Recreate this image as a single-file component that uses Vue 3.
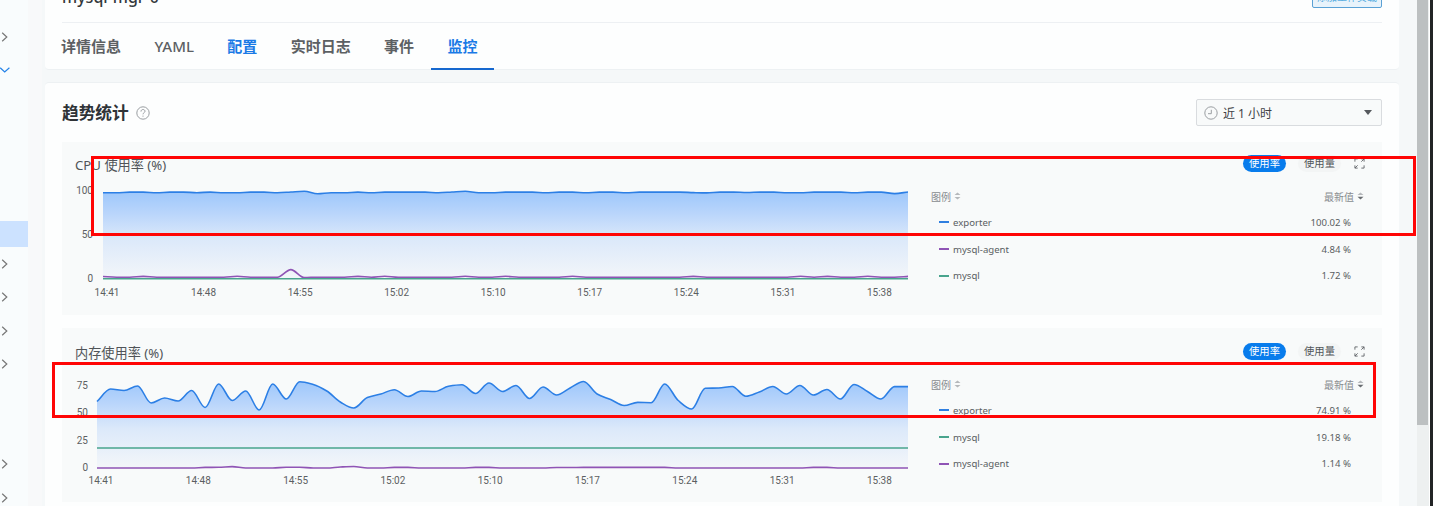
<script setup>
const tabs = [
  { name: '详情信息' }, { name: 'YAML', latin: true }, { name: '配置', blue: true },
  { name: '实时日志' }, { name: '事件' }, { name: '监控', blue: true, active: true },
]

// Monotone cubic curve through evenly spaced points
function curve(x0, x1, ys) {
  const n = ys.length
  const h = (x1 - x0) / (n - 1)
  const d = ys.slice(1).map((y, i) => (y - ys[i]) / h)
  const m = ys.map((_, i) => {
    if (i === 0) return d[0]
    if (i === n - 1) return d[n - 2]
    const a = d[i - 1], b = d[i]
    return a * b <= 0 ? 0 : (2 * a * b) / (a + b)
  })
  let p = `M${x0},${ys[0]}`
  for (let i = 1; i < n; i++) {
    const xa = x0 + h * (i - 1), xb = x0 + h * i
    p += `C${(xa + h / 3).toFixed(2)},${(ys[i - 1] + m[i - 1] * h / 3).toFixed(2)} ${(xb - h / 3).toFixed(2)},${(ys[i] - m[i] * h / 3).toFixed(2)} ${xb.toFixed(2)},${ys[i]}`
  }
  return p
}
function flat(base, bumps) {
  return Array.from({ length: 61 }, (_, i) => (i in bumps ? bumps[i] : base))
}

const cpuTop = flat(50.1, {
  0: 50.8, 1: 50.8, 4: 50.8, 7: 50.7, 9: 50.8, 10: 50.8, 13: 50.8, 14: 50, 15: 49.2, 16: 51.8, 17: 50.8, 18: 50.8,
  20: 50.8, 25: 50.8, 26: 50, 27: 49.2, 28: 50.8, 29: 50.8, 33: 50.8, 36: 50.8, 39: 50.8, 44: 50.6, 45: 50.9,
  48: 50.5, 51: 50.8, 52: 50.8, 56: 50.8, 59: 51.6, 60: 50,
})
const cpuAgent = flat(135.2, {
  0: 134.5, 3: 134.4, 10: 134.3, 14: 127.6, 15: 135.6, 19: 134.4, 21: 134.2, 27: 134.3, 30: 134.3, 35: 134.3,
  44: 134.4, 52: 134.3, 54: 134.4, 57: 134.3, 60: 134.4,
})
const memTop = [
  401.5, 389, 390.5, 386, 403, 398, 401, 390.5, 407.5, 384, 400.5, 391, 410, 384, 399, 381.7, 384.5, 391, 402, 408,
  397.5, 394, 389.7, 396.5, 391, 391.5, 386.3, 384.8, 393.5, 383, 391.5, 385.5, 398.5, 387, 395, 388, 381.5, 394,
  399.5, 405.5, 402.4, 402.7, 384, 400.5, 409, 388.3, 388, 386.5, 396.3, 392, 386.5, 394, 385.5, 395, 389.5, 399,
  384.5, 391.5, 399, 386.6, 386.6,
].map((y) => y - 328)
const memAgent = flat(140, {
  8: 139.4, 9: 139.3, 10: 138.6, 14: 139.3, 15: 139.3, 18: 139, 19: 138.5, 22: 139.4, 23: 139.4, 28: 139.4, 29: 139.4,
  34: 139.5, 35: 139.5, 36: 139.4, 37: 139.4, 38: 139.4, 39: 139.4, 40: 139.4, 41: 139.4, 42: 139.4, 53: 139.4, 54: 139.4,
})

const times = ['14:41', '14:48', '14:55', '15:02', '15:10', '15:17', '15:24', '15:31', '15:38']
const BLUE = '#2f7fe0', PURPLE = '#8f54b5', GREEN = '#49a48d'

const charts = [
  {
    id: 'cpu', title: 'CPU 使用率 (%)', titleY: 28, x0: 41, base: 137, labelX: 31, tx: 45, step: 96.55,
    ticks: [['100', 48], ['50', 92.5], ['0', 136.5]],
    top: curve(41, 846, cpuTop),
    lines: [{ c: PURPLE, d: curve(41, 846, cpuAgent) }, { c: GREEN, d: 'M41,136.8H846' }],
    rows: [['exporter', '100.02 %', BLUE], ['mysql-agent', '4.84 %', PURPLE], ['mysql', '1.72 %', GREEN]],
  },
  {
    id: 'mem', title: '内存使用率 (%)', titleY: 30, x0: 35, base: 140, labelX: 26, tx: 39, step: 97.3,
    ticks: [['75', 57], ['50', 84.5], ['25', 112], ['0', 139.5]],
    top: curve(35, 846, memTop),
    lines: [{ c: GREEN, d: 'M35,120H846' }, { c: PURPLE, d: curve(35, 846, memAgent) }],
    rows: [['exporter', '74.91 %', BLUE], ['mysql', '19.18 %', GREEN], ['mysql-agent', '1.14 %', PURPLE]],
  },
]
const arrows = ['right', 'down', 'right', 'right', 'right', 'right', 'right', 'right']
</script>

<template>
  <div class="page">
    <aside class="side">
      <div class="nav">
        <svg v-for="(a, i) in arrows" :key="i" :class="['arrow', 'a' + i]" viewBox="0 0 10 10">
          <path v-if="a === 'right'" d="M2.2 .8L6.8 5L2.2 9.2" stroke="#777" />
          <path v-else d="M.2 2.8L4.7 7L9.4 2.8" stroke="#2583e8" />
        </svg>
      </div>
      <div class="selected"></div>
    </aside>

    <main class="main">
      <section class="panel head">
        <div class="head-top">
          <span class="name">mysql-mgr-0</span>
          <button class="refresh">添加工作负载</button>
        </div>
        <nav class="tabs">
          <span v-for="t in tabs" :key="t.name" :class="['tab', { blue: t.blue, active: t.active, latin: t.latin }]">{{ t.name }}</span>
        </nav>
      </section>

      <section class="panel stats">
        <header class="stats-head">
          <h2>趋势统计</h2>
          <svg class="help" viewBox="0 0 14 14">
            <circle cx="7" cy="7" r="6.2" />
            <path d="M5 5.6C5 4.2 5.9 3.5 7 3.5S9 4.2 9 5.3C9 6.6 7 6.7 7 8.3M7 9.6V10.7" />
          </svg>
          <div class="range">
            <svg class="clock" viewBox="0 0 14 14">
              <circle cx="7" cy="7" r="6.2" />
              <path d="M7.3 3.8V7.7H4" />
            </svg>
            <span>近 1 小时</span>
            <i class="caret"></i>
          </div>
        </header>

        <article v-for="c in charts" :key="c.id" :class="['card', c.id]">
          <svg class="plot" viewBox="0 0 860 174">
            <defs>
              <linearGradient :id="'fill-' + c.id" x1="0" y1="0" x2="0" y2="1">
                <stop offset="0" stop-color="#9dc7fb" />
                <stop offset=".25" stop-color="#b9d5fb" />
                <stop offset=".55" stop-color="#dce9fa" />
                <stop offset="1" stop-color="#f3f6f9" />
              </linearGradient>
            </defs>
            <text class="title" x="13" :y="c.titleY">{{ c.title }}</text>
            <path :d="`${c.top}V${c.base}H${c.x0}Z`" :fill="`url(#fill-${c.id})`" />
            <path v-for="l in c.lines" :key="l.c" :d="l.d" :stroke="l.c" class="line" />
            <path :d="c.top" stroke="#2c7fe5" class="line" />
            <text v-for="t in c.ticks" :key="t[0]" class="axis" text-anchor="end" :x="c.labelX" :y="t[1] + 3.6">{{ t[0] }}</text>
            <text v-for="(t, i) in times" :key="t" class="axis" text-anchor="middle" :x="c.tx + i * c.step" :y="c.id === 'cpu' ? 154 : 156">{{ t }}</text>
          </svg>
          <div class="legend">
            <div class="tools">
              <span class="pill on">使用率</span>
              <span class="pill">使用量</span>
              <svg class="expand" viewBox="0 0 12 12">
                <path d="M1 4V1H4M8 1H11V4M11 1L8 4M1 8V11H4M1 11L4 8M8 11H11V8" />
              </svg>
            </div>
            <div class="thead">
              <span>图例</span>
              <svg class="sort pale" viewBox="0 0 7 8"><path d="M.5 3L3.5 .5L6.5 3ZM.5 5L3.5 7.5L6.5 5Z" /></svg>
              <span class="latest">最新值</span>
              <svg class="sort" viewBox="0 0 7 8"><path class="up" d="M.5 3L3.5 .5L6.5 3Z" /><path d="M.5 4.8L3.5 7.5L6.5 4.8Z" /></svg>
            </div>
            <div v-for="r in c.rows" :key="r[0]" class="row">
              <i class="mark" :style="{ background: r[2] }"></i>
              <span>{{ r[0] }}</span>
              <span class="value">{{ r[1] }}</span>
            </div>
          </div>
        </article>
      </section>
    </main>

    <div class="scroll"><div class="thumb"></div></div>
    <div class="edge"></div>
    <div class="mark-box box-cpu"></div>
    <div class="mark-box box-mem"></div>
  </div>
</template>

<style>
body { background: #f5f8f9; overflow: hidden; }
</style>

<style scoped>
* { box-sizing: border-box; }
.page {
  position: relative; display: flex; width: 1433px; height: 506px; overflow: hidden;
  background: #f5f8f9; color: #5a5e62;
  font-family: "Noto Sans", "Noto Sans CJK SC", sans-serif;
}
.side { position: relative; flex: none; width: 42px; background: linear-gradient(90deg, #f9fcfd 28px, #f8f9fa 28px); }
.arrow { position: absolute; left: 0; width: 10px; height: 10px; fill: none; stroke-width: 1.2; }
.a0 { top: 32px; } .a1 { top: 65px; } .a2 { top: 259px; } .a3 { top: 292px; }
.a4 { top: 326px; } .a5 { top: 359px; } .a6 { top: 459px; } .a7 { top: 493px; }
.selected { margin-top: 221px; width: 28px; height: 26px; background: #cce2ff; }
.main { flex: none; width: 1358px; margin-left: 3px; height: 506px; }
.panel { width: 1354px; background: #fdfefe; }
.head { height: 70px; padding: 0 17px; border-bottom: 1px solid #edf1f3; border-radius: 0 0 4px 4px; }
.head-top { display: flex; justify-content: space-between; height: 23px; border-bottom: 1px solid #edf0f3; }
.name { font-size: 16px; line-height: 20px; margin-top: -13px; color: #34383c; font-weight: 500; }
.refresh {
  width: 70px; height: 28px; margin-top: -20px; padding: 6px 0 0; border: 1px solid #5aa1d5; border-radius: 2px;
  background: #e8f3fb; color: #5aaee0; font: 10px/20px "Noto Sans CJK SC", sans-serif; white-space: nowrap;
}
.tabs { display: flex; height: 47px; margin-left: -17.6px; }
.tab { height: 47px; padding: 0 16.7px; font-size: 15px; line-height: 47px; font-weight: 700; color: #5c6063; }
.latin { font-weight: 500; }
.blue { color: #1a7ae6; }
.active { border-bottom: 2px solid #1668cf; }
.stats { margin-top: 12px; height: 424px; padding: 16px 17px 0; border-top: 1px solid #edf1f3; border-radius: 4px 4px 0 0; }
.stats-head { display: flex; align-items: center; height: 27px; margin-bottom: 16px; }
h2 { margin: 0; font-size: 16.7px; line-height: 27px; font-weight: 700; color: #2f3337; }
.help, .clock { width: 14px; height: 14px; fill: none; stroke: #9a9ea2; stroke-width: 1; }
.help { margin-left: 7px; }
.range {
  display: flex; align-items: center; width: 186px; height: 27px; margin-left: auto; padding: 0 9px 0 7px;
  border: 1px solid #d9dcdf; border-radius: 2px; background: #f8fafa; font-size: 12px; color: #3f4246;
}
.range span { margin-left: 5px; }
.caret { margin-left: auto; border: 4.5px solid transparent; border-top: 5px solid #55595d; border-bottom: 0; }
.card { display: flex; width: 1320px; height: 173px; margin-bottom: 13px; background: #f8fafa; }
.card.mem { height: 174px; }
.plot { flex: none; width: 860px; height: 174px; display: block; }
.title { font-size: 13.2px; fill: #505458; }
.axis { font: 10px Roboto, sans-serif; fill: #5c5f62; }
.line { fill: none; stroke-width: 1.6; }
.legend { flex: 1; padding: 11px 17px 0 9px; font-size: 10px; }
.tools { display: flex; align-items: center; justify-content: flex-end; height: 21px; }
.mem .tools { height: 25px; }
.pill { width: 43px; height: 17px; border-radius: 9px; font-size: 10.3px; line-height: 17px; text-align: center; background: #f3f5f5; margin-right: 12px; color: #505458; }
.pill.on { background: #087cec; color: #fff; }
.expand { width: 11px; height: 11px; fill: none; stroke: #606468; stroke-width: 1; margin-left: 1px; }
.thead { display: flex; align-items: center; height: 44px; margin-bottom: -9px; padding-right: 1px; color: #888c90; }
.mem .thead { height: 40px; margin-bottom: -7px; }
.latest { margin-left: auto; }
.sort { width: 7px; height: 8px; margin-left: 3px; fill: #686c70; }
.pale, .up { fill: #b5b8bb; }
.row { display: flex; align-items: center; height: 26.7px; margin-left: 8px; padding-right: 14px; font-size: 9.6px; }
.mark { width: 10px; height: 2px; margin-right: 4px; }
.value { margin-left: auto; }
.scroll { flex: none; width: 12px; height: 506px; margin-left: 14px; background: #edf0f0; }
.thumb { width: 11px; height: 425px; background: #bcc0c1; }
.edge { flex: none; width: 4px; margin-left: auto; border-left: 1px solid #fff; background: #222425; }
.mark-box { position: absolute; border: 3px solid #ff0505; }
.box-cpu { left: 91px; top: 156px; width: 1325px; height: 80px; }
.box-mem { left: 52px; top: 362px; width: 1324px; height: 56px; }
</style>
